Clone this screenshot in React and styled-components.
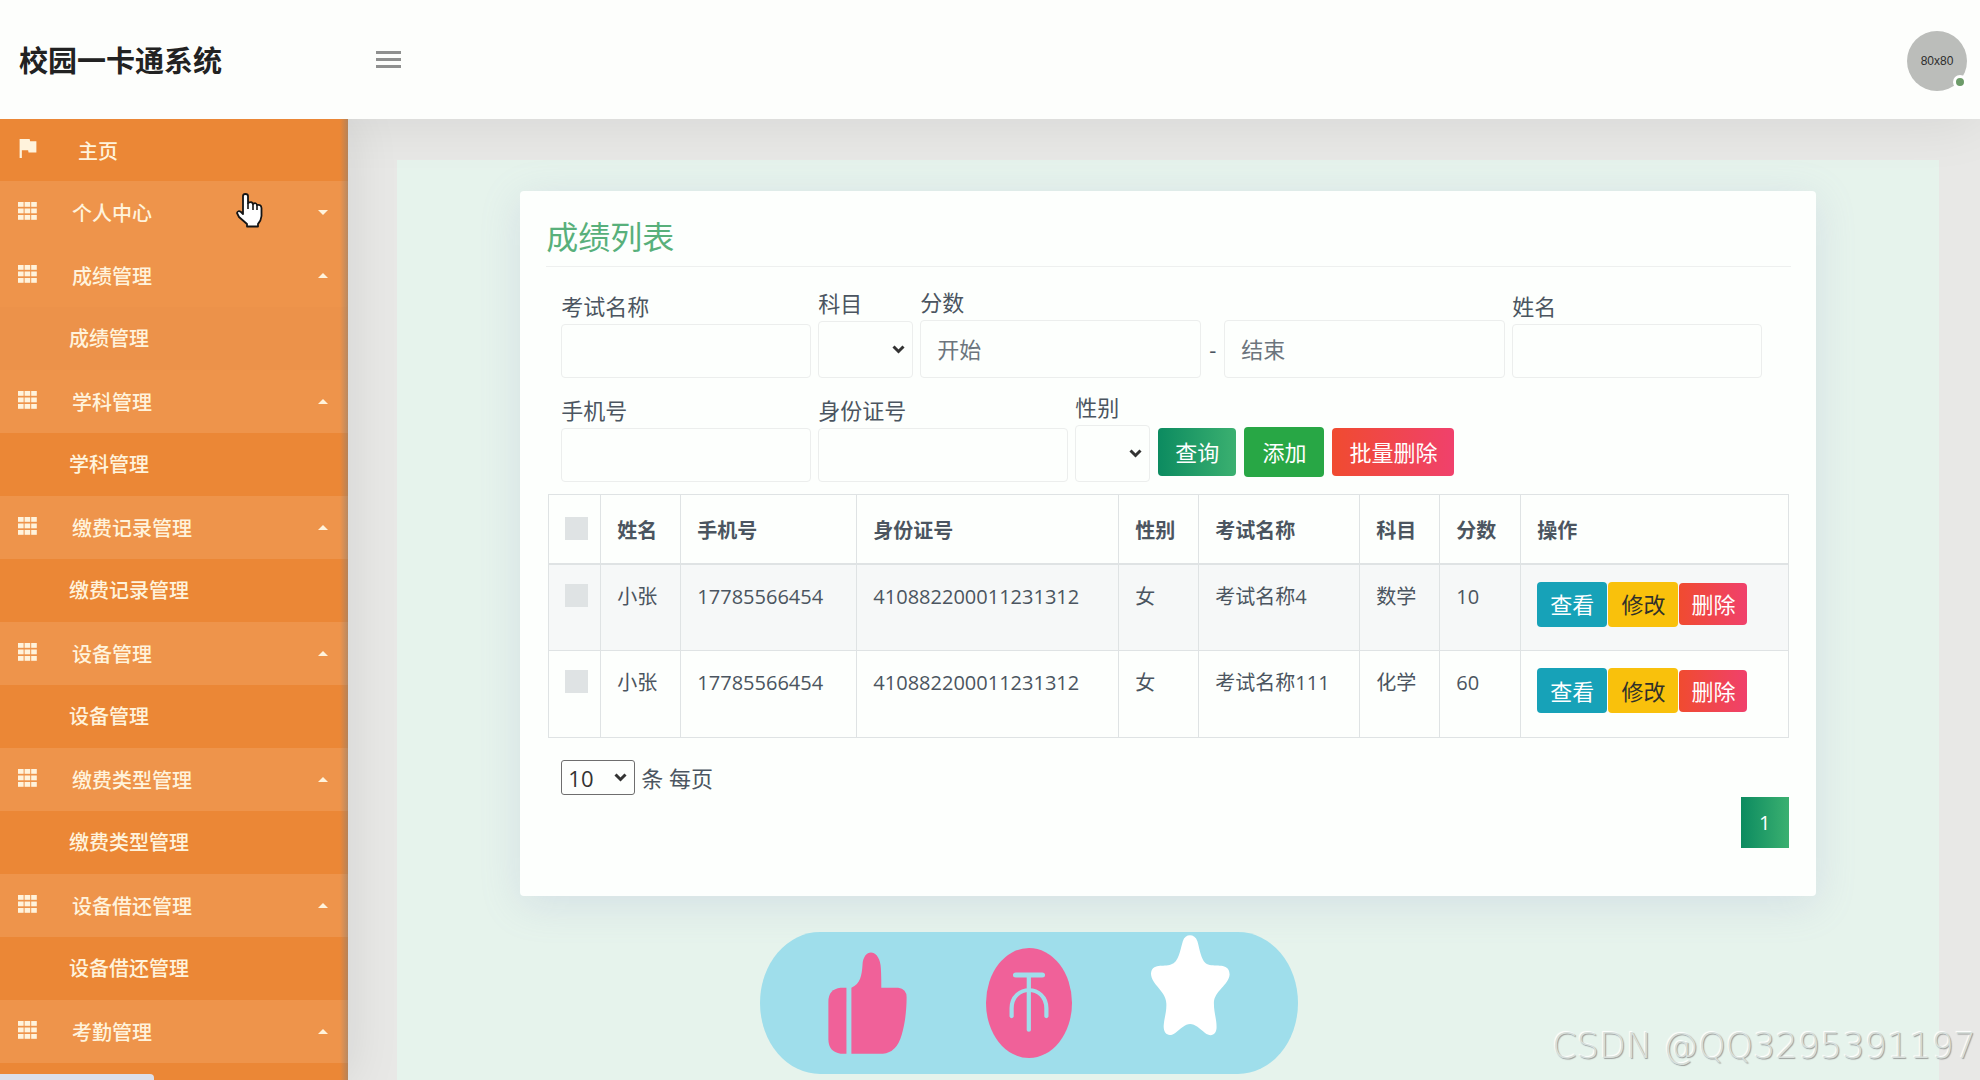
import React from "react";
import styled, { createGlobalStyle, css } from "styled-components";

// Menu and table data
const menus = [
  { name: "个人中心", open: false, children: [] },
  { name: "成绩管理", open: true, active: true, children: ["成绩管理"] },
  { name: "学科管理", open: true, children: ["学科管理"] },
  { name: "缴费记录管理", open: true, children: ["缴费记录管理"] },
  { name: "设备管理", open: true, children: ["设备管理"] },
  { name: "缴费类型管理", open: true, children: ["缴费类型管理"] },
  { name: "设备借还管理", open: true, children: ["设备借还管理"] },
  { name: "考勤管理", open: true, children: [] },
];

const columns = [
  { title: "姓名", width: 80 },
  { title: "手机号", width: 176 },
  { title: "身份证号", width: 262 },
  { title: "性别", width: 80 },
  { title: "考试名称", width: 161 },
  { title: "科目", width: 80 },
  { title: "分数", width: 81 },
  { title: "操作" },
];

const scores = [
  {
    name: "小张",
    phone: "17785566454",
    idCard: "410882200011231312",
    sex: "女",
    exam: "考试名称4",
    subject: "数学",
    score: 10,
  },
  {
    name: "小张",
    phone: "17785566454",
    idCard: "410882200011231312",
    sex: "女",
    exam: "考试名称111",
    subject: "化学",
    score: 60,
  },
];

const FlagIcon = () => (
  <svg width="18" height="19" viewBox="5 4 15 17" fill="currentColor" aria-hidden="true">
    <path d="M14.4 6L14 4H5v17h2v-7h5.6l.4 2h7V6z" />
  </svg>
);

const GridIcon = () => (
  <svg width="19" height="18" viewBox="0 0 19 18" fill="currentColor" aria-hidden="true">
    {[0, 6.5, 13].map((y) =>
      [0, 6.6, 13.2].map((x) => (
        <rect key={`${x}-${y}`} x={x} y={y} width="5.6" height="4.8" />
      ))
    )}
  </svg>
);

const ThumbIcon = () => (
  <svg width="79" height="102" viewBox="229 126 206 306" preserveAspectRatio="none" fill="#f06199" aria-hidden="true">
    <path d="M277 233H262Q230 237 230 275V388Q230 426 262 431H277Z" />
    <path d="M290 233C314 222 317 195 319 165C321 115 360 115 366 165Q368 180 368 233H412Q434 236 434 262C434 300 430 340 421 375Q408 428 372 431H290Z" />
  </svg>
);

const CoinIcon = () => (
  <svg width="86" height="110" viewBox="642 114 225 330" preserveAspectRatio="none" aria-hidden="true">
    <ellipse cx="754.5" cy="279" rx="112.5" ry="165" fill="#f06199" />
    <g fill="none" stroke="#9fdeeb" strokeLinecap="round">
      <path d="M720 195H789" strokeWidth="15" />
      <path d="M754 195V360" strokeWidth="11" />
      <path d="M709 319V295C709 222 800 222 800 295V319" strokeWidth="11" />
    </g>
  </svg>
);

const StarIcon = () => (
  <svg width="79" height="101" viewBox="1075 73 206 304" preserveAspectRatio="none" fill="#ffffff" aria-hidden="true">
    <path d="M1158 92C1164 68 1189 68 1196 92C1204 125 1207 160 1228 163C1250 167 1280 158 1280 192C1278 224 1239 242 1239 278C1239 307 1246 325 1246 350C1246 374 1231 381 1216 368C1202 355 1190 341 1177 341C1164 341 1152 356 1139 367C1124 381 1108 374 1108 348C1109 324 1116 305 1115 279C1114 242 1076 223 1075 190C1077 157 1108 170 1127 162C1148 154 1150 122 1158 92Z" />
  </svg>
);

const HandIcon = () => (
  <svg width="27" height="35" viewBox="0 0 27 35" aria-hidden="true">
    <path
      d="M7 3Q7 1 9.3 1Q12 1 12 3V10Q16 8 17 11Q20 9 21 12Q25 11 25.5 15V23Q25 28 22 31V33.500H11V31L3 24L1 20Q2 17 5 19L7 21Z"
      fill="#fff"
      stroke="#151515"
      strokeWidth="1.8"
      strokeLinejoin="round"
    />
    <path d="M12 10V16M17 11V17M21 12V17" stroke="#151515" strokeWidth="1.6" />
  </svg>
);

const App = () => {
  return (
    <Page>
      <GlobalStyle />

      {/* Top bar */}
      <Header>
        <Brand>校园一卡通系统</Brand>
        <MenuToggle type="button" aria-label="菜单">
          <ToggleLine />
          <ToggleLine />
          <ToggleLine />
        </MenuToggle>
        <Avatar>
          80x80
          <OnlineDot />
        </Avatar>
      </Header>

      <Body>
        {/* Side menu */}
        <Sidebar>
          <HomeLink href="#home">
            <FlagIcon />
            <span>主页</span>
          </HomeLink>
          {menus.map((menu) => (
            <React.Fragment key={menu.name}>
              <MenuButton type="button" aria-expanded={menu.open}>
                <GridIcon />
                <span>{menu.name}</span>
                <Caret $up={menu.open} />
              </MenuButton>
              {menu.children.map((child) => (
                <SubLink key={child} href="#list" $active={menu.active}>
                  {child}
                </SubLink>
              ))}
            </React.Fragment>
          ))}
        </Sidebar>

        <Main>
          <Panel>
            <Card>
              <CardTitle>成绩列表</CardTitle>

              {/* Search form */}
              <SearchForm onSubmit={(e) => e.preventDefault()}>
                <Field>
                  <Label htmlFor="exam">考试名称</Label>
                  <TextInput id="exam" type="text" />
                </Field>
                <Field>
                  <Label htmlFor="subject">科目</Label>
                  <SelectInput id="subject" $width={95} />
                </Field>
                <Field>
                  <Label htmlFor="scoreStart">分数</Label>
                  <Range>
                    <RangeInput id="scoreStart" type="text" placeholder="开始" />
                    <Dash>-</Dash>
                    <RangeInput type="text" placeholder="结束" aria-label="结束" />
                  </Range>
                </Field>
                <Field>
                  <Label htmlFor="name">姓名</Label>
                  <TextInput id="name" type="text" />
                </Field>
                <Field>
                  <Label htmlFor="phone">手机号</Label>
                  <TextInput id="phone" type="text" />
                </Field>
                <Field>
                  <Label htmlFor="idCard">身份证号</Label>
                  <TextInput id="idCard" type="text" />
                </Field>
                <Field>
                  <Label htmlFor="sex">性别</Label>
                  <SelectInput id="sex" $width={75} />
                </Field>
                <FormButtons>
                  <Button type="submit" $kind="search">查询</Button>
                  <Button type="button" $kind="add">添加</Button>
                  <Button type="button" $kind="remove">批量删除</Button>
                </FormButtons>
              </SearchForm>

              {/* Score table */}
              <Table>
                <colgroup>
                  <Col $width={52} />
                  {columns.map((col) => (
                    <Col key={col.title} $width={col.width} />
                  ))}
                </colgroup>
                <thead>
                  <tr>
                    <CheckHead>
                      <CheckBox type="checkbox" aria-label="全选" />
                    </CheckHead>
                    {columns.map((col) => (
                      <HeadCell key={col.title}>{col.title}</HeadCell>
                    ))}
                  </tr>
                </thead>
                <tbody>
                  {scores.map((row, index) => (
                    <Row key={index}>
                      <Cell>
                        <CheckBox type="checkbox" aria-label={row.exam} />
                      </Cell>
                      <Cell>{row.name}</Cell>
                      <Cell>{row.phone}</Cell>
                      <Cell>{row.idCard}</Cell>
                      <Cell>{row.sex}</Cell>
                      <Cell>{row.exam}</Cell>
                      <Cell>{row.subject}</Cell>
                      <Cell>{row.score}</Cell>
                      <Cell>
                        <Actions>
                          <Button type="button" $small $kind="view">查看</Button>
                          <Button type="button" $small $kind="edit">修改</Button>
                          <Button type="button" $small $kind="remove">删除</Button>
                        </Actions>
                      </Cell>
                    </Row>
                  ))}
                </tbody>
              </Table>

              {/* Paging */}
              <PageSize>
                <PageSizeSelect id="pageSize" defaultValue="10">
                  <option>10</option>
                  <option>25</option>
                  <option>50</option>
                </PageSizeSelect>
                <label htmlFor="pageSize">条 每页</label>
              </PageSize>
              <Pager>
                <PageButton type="button">1</PageButton>
              </Pager>
            </Card>
          </Panel>
        </Main>
      </Body>

      <LikeBar>
        <ThumbIcon />
        <CoinIcon />
        <StarIcon />
      </LikeBar>
      <Watermark>CSDN @QQ3295391197</Watermark>
      <StatusBar />
      <Pointer>
        <HandIcon />
      </Pointer>
    </Page>
  );
};

export default App;

// Styled Components for CSS

const GlobalStyle = createGlobalStyle`
  * {
    box-sizing: border-box;
  }

  body {
    margin: 0;
    font-family: "Open Sans", "Noto Sans CJK SC", sans-serif;
    color: #4b5560;
  }

  button,
  input,
  select {
    font-family: inherit;
  }
`;

const Page = styled.div`
  position: relative;
  display: flex;
  flex-direction: column;
  height: 100vh;
  overflow: hidden;
  background: #e8e8e6;
`;

const Header = styled.header`
  position: relative;
  z-index: 2;
  display: flex;
  align-items: center;
  flex: none;
  height: 119px;
  padding: 0 13px 0 19px;
  background: #fdfefc;
  box-shadow: 0 0 60px rgba(0, 0, 0, 0.09);
`;

const Brand = styled.div`
  width: 357px;
  padding-bottom: 2px;
  font-size: 29px;
  font-weight: 700;
  color: #222;
`;

const MenuToggle = styled.button`
  display: flex;
  flex-direction: column;
  gap: 4px;
  width: 25px;
  padding: 0;
  border: none;
  background: none;
  cursor: pointer;
`;

const ToggleLine = styled.span`
  height: 3px;
  background: #8f908f;
`;

const Avatar = styled.div`
  position: relative;
  display: flex;
  align-items: center;
  justify-content: center;
  width: 60px;
  height: 60px;
  margin-top: 2px;
  margin-left: auto;
  border-radius: 50%;
  background: #bbbdba;
  font-family: "Liberation Sans", sans-serif;
  font-size: 12px;
  color: #2d2d2d;
`;

const OnlineDot = styled.span`
  position: absolute;
  right: 0;
  bottom: 2px;
  width: 14px;
  height: 14px;
  border: 3px solid #fff;
  border-radius: 50%;
  background: #6d9b69;
`;

const Body = styled.div`
  display: flex;
  flex: 1;
  min-height: 0;
`;

const Sidebar = styled.nav`
  position: relative;
  z-index: 3;
  flex: none;
  width: 348px;
  overflow: hidden;
  background: #eb8736;
  box-shadow: 0 0 50px rgba(0, 0, 0, 0.1);
  clip-path: inset(0 -60px 0 0);

  &::after {
    content: "";
    position: absolute;
    top: 0;
    right: 0;
    bottom: 0;
    width: 8px;
    background: linear-gradient(to right, rgba(120, 120, 120, 0), rgba(130, 125, 120, 0.5));
  }
`;

const menuItem = css`
  display: flex;
  align-items: center;
  width: 100%;
  height: 63px;
  font-size: 20px;
  font-weight: 500;
  color: #fff3dc;
  text-decoration: none;

  svg {
    margin-bottom: 3px;
  }
`;

const HomeLink = styled.a`
  ${menuItem}
  gap: 41px;
  height: 62px;
  padding: 0 19px;
`;

const MenuButton = styled.button`
  ${menuItem}
  gap: 35px;
  padding: 0 20px 0 18px;
  border: none;
  background: #ee944b;
  cursor: pointer;
`;

const Caret = styled.span`
  margin-left: auto;
  border: 5px solid transparent;
  ${({ $up }) =>
    $up
      ? "border-top: none; border-bottom-color: #fff3dc;"
      : "border-bottom: none; border-top-color: #fff3dc;"}
`;

const SubLink = styled.a`
  ${menuItem}
  padding: 0 0 2px 69px;
  background: ${({ $active }) => ($active ? "#ec924a" : "#eb8736")};
`;

const Main = styled.main`
  flex: 1;
  display: flex;
  min-width: 0;
  padding: 41px 41px 0 49px;
`;

const Panel = styled.section`
  flex: 1;
  min-width: 0;
  padding: 31px 8% 0;
  background: #e6f3ec;
`;

const Card = styled.div`
  padding: 22px 25px 48px 26px;
  border-radius: 4px;
  background: #fdfffd;
  box-shadow: 0 8px 40px rgba(140, 150, 200, 0.2);
`;

const CardTitle = styled.h1`
  margin: 0 0 18px;
  padding-bottom: 5px;
  border-bottom: 1px solid #eef0ef;
  font-size: 32px;
  font-weight: 400;
  line-height: 48px;
  color: #58b07b;
`;

const SearchForm = styled.form`
  display: flex;
  flex-wrap: wrap;
  align-items: flex-end;
  gap: 12px 7px;
  padding: 0 15px;
`;

const Field = styled.div`
  display: flex;
  flex-direction: column;
`;

const Label = styled.label`
  font-size: 22px;
  line-height: 35px;
`;

const inputBox = css`
  border: 1px solid #eceeed;
  border-radius: 4px;
  background: #fdfffd;
  font-size: 22px;
  color: #4b5560;
`;

const arrow = css`
  appearance: none;
  background: #fdfffd
    url("data:image/svg+xml,%3Csvg xmlns='http://www.w3.org/2000/svg' width='13' height='9' fill='none' stroke='%23333' stroke-width='3'%3E%3Cpath d='M1.500 1.500L6.500 6.500L11.500 1.500'/%3E%3C/svg%3E")
    no-repeat right 7px center;
`;

const TextInput = styled.input`
  ${inputBox}
  width: 250px;
  height: 54px;
  padding: 0 16px;
`;

const SelectInput = styled.select`
  ${inputBox}
  ${arrow}
  width: ${({ $width }) => $width}px;
  height: 57px;
  padding: 0 24px 0 6px;
`;

const Range = styled.div`
  display: flex;
  align-items: center;
`;

const RangeInput = styled.input`
  ${inputBox}
  width: 281px;
  height: 58px;
  padding: 0 16px;

  &::placeholder {
    color: #6c757d;
  }
`;

const Dash = styled.span`
  width: 23px;
  font-size: 22px;
  text-align: center;
`;

const FormButtons = styled.div`
  display: flex;
  align-items: center;
  gap: 8px;
  padding: 0 0 5px 1px;
`;

const kinds = {
  search: "background: linear-gradient(to right, #0c8b60, #3bb070);",
  add: "background: #28a745; height: 50px; padding: 0 18px 2px;",
  remove: "background: linear-gradient(to right, #f04b30, #f0416c);",
  view: "background: #17a2b8; height: 45px; padding: 0 13px 2px;",
  edit: "background: #f9c10c; color: #30302a; height: 45px; padding: 0 13px 2px;",
};

const Button = styled.button`
  height: ${({ $small }) => ($small ? 42 : 48)}px;
  padding: 0 ${({ $small }) => ($small ? 12 : 17)}px 2px;
  border: none;
  border-radius: 4px;
  font-size: 22px;
  color: #fff;
  white-space: nowrap;
  cursor: pointer;
  ${({ $kind }) => kinds[$kind]}
`;

const Table = styled.table`
  width: calc(100% - 4px);
  margin: 12px 2px 0;
  border-collapse: collapse;
  table-layout: fixed;
  font-size: 20px;
  line-height: 30px;
`;

const Col = styled.col`
  width: ${({ $width }) => ($width ? `${$width}px` : "auto")};
`;

const HeadCell = styled.th`
  height: 69px;
  padding: 5px 16px 0;
  border: 1px solid #dfe3e4;
  border-bottom-width: 2px;
  font-weight: 700;
  text-align: left;
`;

const CheckHead = styled(HeadCell)`
  padding: 20px 16px 0;
  vertical-align: top;
`;

const Row = styled.tr`
  &:nth-child(odd) {
    background: #f6f8f8;
  }
`;

const Cell = styled.td`
  height: 87px;
  padding: 17px 16px 0;
  border: 1px solid #dfe3e4;
  vertical-align: top;
`;

const CheckBox = styled.input`
  display: block;
  appearance: none;
  width: 23px;
  height: 23px;
  margin: 2px 0 0;
  background: #dfe3e4;
  cursor: pointer;
`;

const Actions = styled.div`
  display: flex;
  align-items: center;
  gap: 1px;
`;

const PageSize = styled.div`
  display: flex;
  align-items: center;
  gap: 6px;
  margin-top: 22px;
  padding: 0 15px;
  font-size: 22px;
  line-height: 34px;
`;

const PageSizeSelect = styled.select`
  ${arrow}
  width: 74px;
  height: 35px;
  padding: 0 20px 0 6px;
  border: 1px solid #6e6e6e;
  border-radius: 3px;
  font-size: 22px;
  color: #333;
`;

const Pager = styled.div`
  display: flex;
  justify-content: flex-end;
  margin-top: 2px;
  padding-right: 2px;
`;

const PageButton = styled.button`
  width: 48px;
  height: 51px;
  padding: 0;
  border: none;
  background: linear-gradient(to right, #0c8b60, #3bb070);
  font-size: 20px;
  color: #fff;
`;

const LikeBar = styled.div`
  position: absolute;
  z-index: 4;
  left: 760px;
  bottom: 6px;
  display: flex;
  gap: 79px;
  width: 538px;
  height: 142px;
  padding: 3px 68px 0;
  border-radius: 60px / 71px;
  background: #9fdeeb;

  svg:nth-child(1) {
    margin-top: 17px;
  }

  svg:nth-child(2) {
    margin-top: 13px;
  }
`;

const Watermark = styled.div`
  position: absolute;
  z-index: 4;
  right: 4px;
  bottom: 13px;
  font-family: "DejaVu Sans", sans-serif;
  font-size: 35px;
  font-weight: 200;
  line-height: 42px;
  color: #d8dfdb;
  text-shadow: 1px 1px 1px #9a9d9b, -1px -1px 1px #fff;
`;

const StatusBar = styled.div`
  position: absolute;
  z-index: 4;
  left: 0;
  bottom: 0;
  width: 154px;
  height: 6px;
  border-top-right-radius: 4px;
  background: #dcdfe9;
`;

const Pointer = styled.div`
  position: absolute;
  z-index: 5;
  left: 236px;
  top: 193px;
`;
